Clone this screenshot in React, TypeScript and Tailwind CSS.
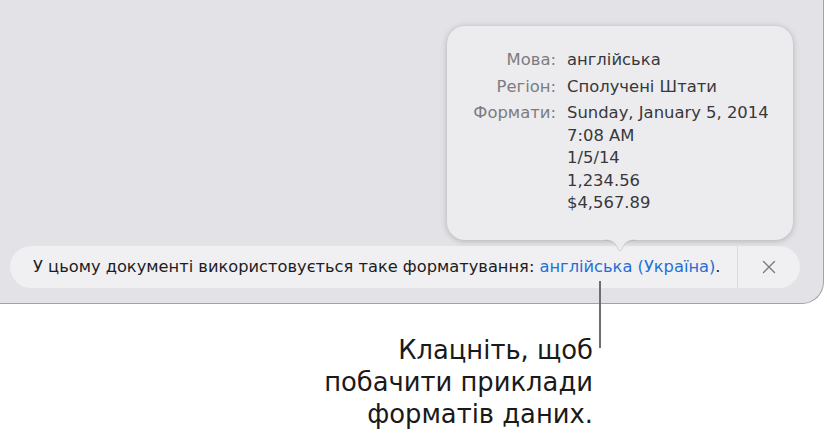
import React from "react";

const font = { fontFamily: "'DejaVu Sans', 'Noto Sans', sans-serif" };

const rows: { label: string; values: string[] }[] = [
    { label: "Мова:", values: ["англійська"] },
    { label: "Регіон:", values: ["Сполучені Штати"] },
    {
        label: "Формати:",
        values: ["Sunday, January 5, 2014", "7:08 AM", "1/5/14", "1,234.56", "$4,567.89"],
    },
];

const Popover: React.FC = () => (
    <div className="absolute left-[447px] top-[26px] w-[346px] h-[214px] rounded-[18px] bg-[#ececef] shadow-[0_1px_6px_rgba(0,0,0,0.22)]">
        <div className="grid grid-cols-[109px_1fr] gap-x-[11px] gap-y-[4px] pt-[23px] text-[16.4px] leading-[22.5px]">
            {rows.map((row) => (
                <React.Fragment key={row.label}>
                    <div className="text-right text-[#7c7c80]">{row.label}</div>
                    <div className="text-[#38383b]">
                        {row.values.map((v) => (
                            <div key={v}>{v}</div>
                        ))}
                    </div>
                </React.Fragment>
            ))}
        </div>
        {/* стрілка вниз */}
        <svg
            className="absolute left-[157px] top-[210px]"
            width="32"
            height="18"
            viewBox="0 0 32 18"
        >
            <path d="M0 4 C8 4 11 6 14 13 C15 15.5 17 15.5 18 13 C21 6 24 4 32 4 L32 0 L0 0 Z" fill="#ececef" />
            <path d="M0 4 C8 4 11 6 14 13 C15 15.5 17 15.5 18 13 C21 6 24 4 32 4" fill="none" stroke="rgba(0,0,0,0.12)" strokeWidth="1" />
        </svg>
    </div>
);

export default function App() {
    return (
        <div className="relative w-[827px] h-[436px] bg-white overflow-hidden" style={font}>
            {/* вікно */}
            <div className="w-[824px] h-[304px] bg-[#e2e2e7] border-r border-b border-[#a3a3a7] rounded-br-[22px] flex flex-col justify-end px-[10px] pb-[15px]">
                <div className="h-[42px] w-[790px] rounded-full bg-[#f0f0f2] flex items-center">
                    <div className="flex-1 pl-[23px] text-[16.25px] text-[#1d1d1f] whitespace-nowrap">
                        У цьому документі використовується таке форматування:{" "}
                        <span className="text-[#1f6fd6]">англійська (Україна)</span>.
                    </div>
                    <div className="w-px self-stretch bg-[#dcdcdf]" />
                    <div className="w-[62px] flex items-center justify-center">
                        <svg width="14" height="14" viewBox="0 0 14 14">
                            <path d="M1.5 1.5 L12.5 12.5 M12.5 1.5 L1.5 12.5" stroke="#7a7a7e" strokeWidth="1.4" strokeLinecap="round" />
                        </svg>
                    </div>
                </div>
            </div>

            <Popover />

            {/* виноска */}
            <div className="absolute left-[599px] top-[281px] w-[2px] h-[67px] bg-[#6e6e72]" />
            <div className="pr-[234px] pt-[30px] text-right text-[25.8px] leading-[32px] text-[#1a1a1a]">
                <div>Клацніть, щоб</div>
                <div>побачити приклади</div>
                <div>форматів даних.</div>
            </div>
        </div>
    );
}
